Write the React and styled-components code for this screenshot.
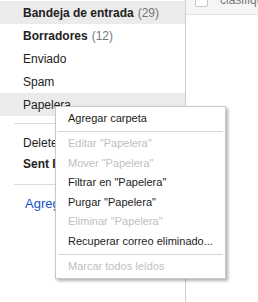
import React from "react";
import styled, { createGlobalStyle } from "styled-components";

const Global = createGlobalStyle`
  html, body { margin: 0; padding: 0; background: #fff; }
  body { font-family: "Liberation Sans", Arial, sans-serif; color: #222; overflow: hidden; }
`;

const Page = styled.div`
  display: flex;
  width: 258px;
  height: 302px;
  position: relative;
  overflow: hidden;
`;

const Sidebar = styled.nav`
  width: 185px;
  flex: none;
  padding-top: 1px;
  font-size: 12px;
`;

const FolderRow = styled.div`
  height: 23px;
  display: flex;
  align-items: center;
  padding-left: 23px;
  background: ${(p) => (p.$active ? "#ebebeb" : "transparent")};
  font-weight: ${(p) => (p.$bold ? "bold" : "normal")};
  color: #222;
  white-space: nowrap;
`;

const SmallRow = styled(FolderRow)`
  height: 21px;
`;

const Count = styled.span`
  font-weight: normal;
  color: #777;
  margin-left: 4px;
`;

const Divider = styled.div`
  height: 0;
  border-top: 1px solid #dcdcdc;
  margin: ${(p) => p.$m || "7px 0 8px 14px"};
`;

const AddLink = styled.a`
  display: block;
  padding-left: 25px;
  color: #15c;
  font-size: 13px;
  text-decoration: none;
  line-height: 20px;
  white-space: nowrap;
`;

const Main = styled.main`
  flex: 1;
  border-left: 1px solid #cfcfcf;
  min-width: 0;
`;

const Toolbar = styled.div`
  height: 14px;
  background: #f5f5f5;
  border-bottom: 1px solid #e2e2e2;
  display: flex;
  align-items: flex-end;
  overflow: hidden;
  padding-left: 9px;
  gap: 12px;
  white-space: nowrap;
`;

const CheckBox = styled.span`
  width: 11px;
  height: 13px;
  flex: none;
  margin-bottom: 7px;
  border: 1px solid #c6c6c6;
  border-radius: 2px;
  background: #fff;
`;

const ToolText = styled.span`
  font-size: 12px;
  color: #777;
  line-height: 12px;
  margin-bottom: 8px;
`;

const Menu = styled.ul`
  position: absolute;
  left: 55px;
  top: 106px;
  width: 169px;
  margin: 0;
  padding: 2px 0;
  list-style: none;
  background: #fff;
  border: 1px solid #c8c8c8;
  box-shadow: 2px 2px 3px rgba(0, 0, 0, 0.3);
  font-size: 11px;
`;

const MenuItem = styled.li`
  height: 19.5px;
  line-height: 19.5px;
  padding-left: 12px;
  color: ${(p) => (p.$disabled ? "#c0c0c0" : "#222")};
  white-space: nowrap;
`;

const MenuSep = styled.li`
  height: 0;
  border-top: 1px solid #d6d6d6;
  margin: 2.5px 2px 2px 2px;
`;

export default function App() {
  return (
    <Page>
      <Global />
      <Sidebar>
        <FolderRow $active $bold>
          Bandeja de entrada<Count>(29)</Count>
        </FolderRow>
        <FolderRow $bold>
          Borradores<Count>(12)</Count>
        </FolderRow>
        <FolderRow>Enviado</FolderRow>
        <FolderRow>Spam</FolderRow>
        <FolderRow $active>Papelera</FolderRow>
        <Divider />
        <SmallRow>Deleted Items</SmallRow>
        <SmallRow $bold>Sent Items</SmallRow>
        <Divider $m="10px 0 9px 14px" />
        <AddLink href="#">Agregar carpeta</AddLink>
      </Sidebar>
      <Main>
        <Toolbar>
          <CheckBox />
          <ToolText>clasifique</ToolText>
        </Toolbar>
      </Main>
      <Menu>
        <MenuItem>Agregar carpeta</MenuItem>
        <MenuSep />
        <MenuItem $disabled>Editar "Papelera"</MenuItem>
        <MenuItem $disabled>Mover "Papelera"</MenuItem>
        <MenuItem>Filtrar en "Papelera"</MenuItem>
        <MenuItem>Purgar "Papelera"</MenuItem>
        <MenuItem $disabled>Eliminar "Papelera"</MenuItem>
        <MenuItem>Recuperar correo eliminado...</MenuItem>
        <MenuSep />
        <MenuItem $disabled>Marcar todos leídos</MenuItem>
      </Menu>
    </Page>
  );
}
